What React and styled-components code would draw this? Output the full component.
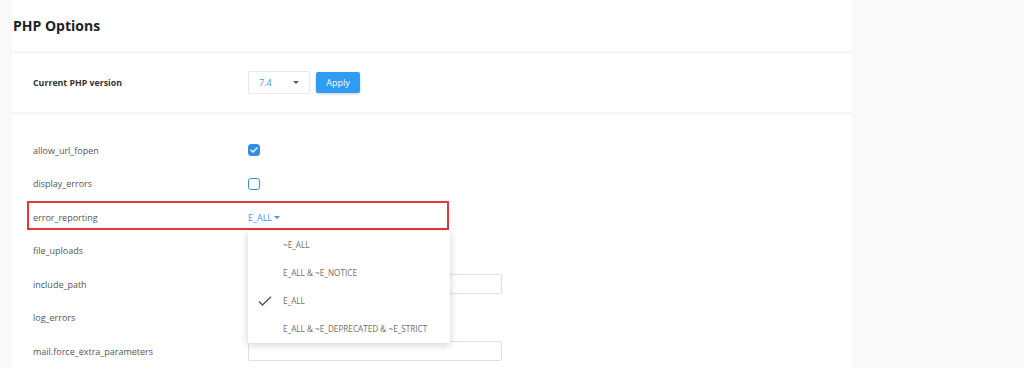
import React from "react";
import styled, { createGlobalStyle } from "styled-components";

const GlobalStyle = createGlobalStyle`
  html, body {
    margin: 0;
    padding: 0;
    background: #f9f9f9;
    font-family: "Open Sans", "Noto Sans", sans-serif;
  }
`;

const Page = styled.div`
  display: flex;
  height: 368px;
  overflow: hidden;
  background: #f9f9f9;
`;

const Panel = styled.div`
  margin-left: 12px;
  width: 840px;
  background: #fff;
  display: flex;
  flex-direction: column;
`;

const Header = styled.div`
  height: 52px;
  display: flex;
  align-items: center;
  padding-left: 1px;
`;

const Title = styled.h1`
  margin: 0;
  font-size: 14px;
  font-weight: 700;
  color: #222;
`;

const Divider = styled.div`
  height: 3px;
  background: #f6f6f6;
`;

const VersionRow = styled.div`
  height: 58px;
  display: flex;
  align-items: center;
  padding-left: 21px;
`;

const Label = styled.div`
  width: 215px;
  font-size: ${(p) => (p.bold ? 8.8 : 9)}px;
  font-weight: ${(p) => (p.bold ? 700 : 400)};
  color: ${(p) => (p.bold ? "#333" : "#555")};
`;

const Select = styled.div`
  box-sizing: border-box;
  width: 62px;
  height: 23px;
  border: 1px solid #e8e8e8;
  border-radius: 2px;
  display: flex;
  align-items: center;
  justify-content: space-between;
  padding: 0 10px 0 10px;
  font-size: 9px;
  color: #3d9be9;
`;

const Caret = styled.span`
  width: 0;
  height: 0;
  border-left: 3px solid transparent;
  border-right: 3px solid transparent;
  border-top: 3px solid ${(p) => p.color || "#555"};
  margin-left: ${(p) => p.gap || 0}px;
`;

const ApplyButton = styled.button`
  margin-left: 6px;
  width: 44px;
  height: 21px;
  border: none;
  border-radius: 2px;
  background: #2e9cf2;
  color: #fff;
  font-family: inherit;
  font-size: 9px;
  box-shadow: 0 1px 3px rgba(0, 0, 0, 0.2);
  padding: 0;
`;

const Options = styled.div`
  padding-top: 19px;
  display: flex;
  flex-direction: column;
`;

const Row = styled.div`
  position: relative;
  height: 33.5px;
  display: flex;
  align-items: center;
  padding-left: 21px;

  ${(p) =>
    p.highlight &&
    `
    &::after {
      content: "";
      position: absolute;
      left: 15px;
      top: 0;
      width: 422px;
      height: 29px;
      box-sizing: border-box;
      border: 2px solid #e3393b;
      pointer-events: none;
    }
  `}
`;

const Checkbox = styled.span`
  box-sizing: border-box;
  width: 12px;
  height: 12px;
  border-radius: 3px;
  border: 1.5px solid #3a8fdc;
  background: ${(p) => (p.checked ? "#2f8fe4" : "#fff")};
  display: flex;
  align-items: center;
  justify-content: center;
`;

const Control = styled.div`
  position: relative;
  display: flex;
  align-items: center;
`;

const Trigger = styled.div`
  display: flex;
  align-items: center;
  font-size: 9px;
  color: #3d9be9;
`;

const TextInput = styled.div`
  box-sizing: border-box;
  width: 254px;
  height: 20px;
  border: 1px solid #e0e0e0;
  border-radius: 2px;
  background: #fff;
`;

const Menu = styled.div`
  position: absolute;
  left: 0;
  top: 20px;
  width: 202px;
  background: #fff;
  box-shadow: 0 2px 8px rgba(0, 0, 0, 0.18);
  z-index: 5;
`;

const MenuItem = styled.div`
  position: relative;
  height: 28px;
  display: flex;
  align-items: center;
  padding-left: 35px;
  font-size: 8.2px;
  color: #6f6f6f;
  white-space: nowrap;
`;

const CheckMark = styled.svg`
  position: absolute;
  left: 10px;
  top: 9px;
`;

const errorLevels = ["~E_ALL", "E_ALL & ~E_NOTICE", "E_ALL", "E_ALL & ~E_DEPRECATED & ~E_STRICT"];

const Tick = () => (
  <svg width="8" height="6" viewBox="0 0 8 6">
    <path d="M1 3.2 L3 5 L7 1" fill="none" stroke="#fff" strokeWidth="1.4" strokeLinecap="round" strokeLinejoin="round" />
  </svg>
);

const ErrorReporting = () => (
  <Control>
    <Trigger>
      E_ALL
      <Caret color="#3d9be9" gap={2} />
    </Trigger>
    <Menu>
      {errorLevels.map((level) => (
        <MenuItem key={level}>
          {level === "E_ALL" && (
            <CheckMark width="14" height="10" viewBox="0 0 14 10">
              <path d="M1 5.5 L4.5 9 L13 0.8" fill="none" stroke="#555" strokeWidth="1.4" />
            </CheckMark>
          )}
          {level}
        </MenuItem>
      ))}
    </Menu>
  </Control>
);

const options = [
  { name: "allow_url_fopen", type: "checkbox", checked: true },
  { name: "display_errors", type: "checkbox", checked: false },
  { name: "error_reporting", type: "select" },
  { name: "file_uploads", type: "checkbox", checked: true },
  { name: "include_path", type: "text" },
  { name: "log_errors", type: "checkbox", checked: true },
  { name: "mail.force_extra_parameters", type: "text" },
];

const renderControl = (opt) => {
  if (opt.type === "checkbox") {
    return <Checkbox checked={opt.checked}>{opt.checked && <Tick />}</Checkbox>;
  }
  if (opt.type === "select") return <ErrorReporting />;
  return <TextInput />;
};

export default function App() {
  return (
    <>
      <GlobalStyle />
      <Page>
        <Panel>
          <Header>
            <Title>PHP Options</Title>
          </Header>
          <Divider />
          <VersionRow>
            <Label bold>Current PHP version</Label>
            <Select>
              7.4
              <Caret />
            </Select>
            <ApplyButton>Apply</ApplyButton>
          </VersionRow>
          <Divider />
          <Options>
            {options.map((opt) => (
              <Row key={opt.name} highlight={opt.type === "select"}>
                <Label>{opt.name}</Label>
                {renderControl(opt)}
              </Row>
            ))}
          </Options>
        </Panel>
      </Page>
    </>
  );
}
